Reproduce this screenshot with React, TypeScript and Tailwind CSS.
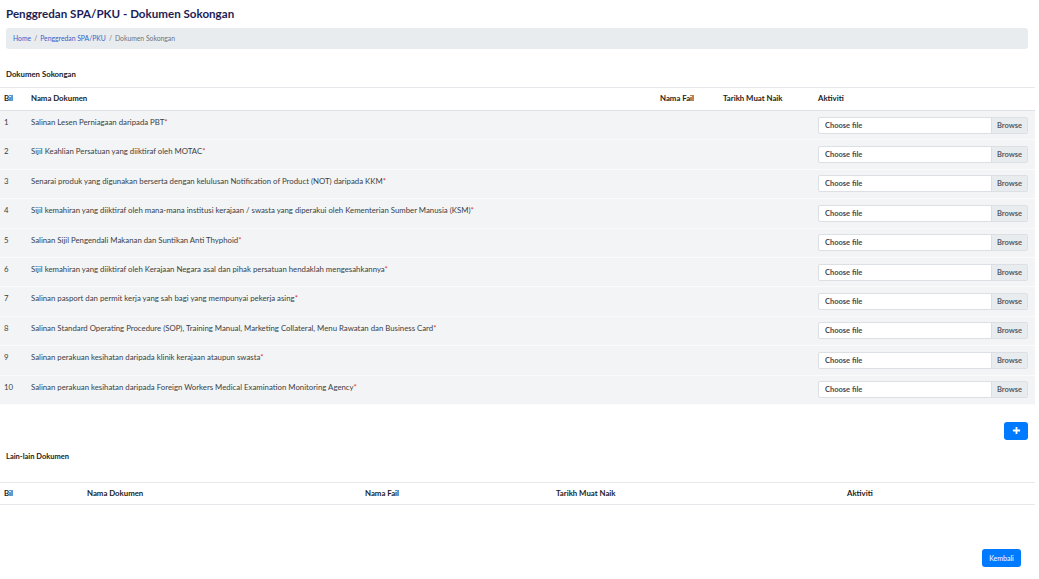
const docs = [
  "Salinan Lesen Perniagaan daripada PBT",
  "Sijil Keahlian Persatuan yang diiktiraf oleh MOTAC",
  "Senarai produk yang digunakan berserta dengan kelulusan Notification of Product (NOT) daripada KKM",
  "Sijil kemahiran yang diiktiraf oleh mana-mana institusi kerajaan / swasta yang diperakui oleh Kementerian Sumber Manusia (KSM)",
  "Salinan Sijil Pengendali Makanan dan Suntikan Anti Thyphoid",
  "Sijil kemahiran yang diiktiraf oleh Kerajaan Negara asal dan pihak persatuan hendaklah mengesahkannya",
  "Salinan pasport dan permit kerja yang sah bagi yang mempunyai pekerja asing",
  "Salinan Standard Operating Procedure (SOP), Training Manual, Marketing Collateral, Menu Rawatan dan Business Card",
  "Salinan perakuan kesihatan daripada klinik kerajaan ataupun swasta",
  "Salinan perakuan kesihatan daripada Foreign Workers Medical Examination Monitoring Agency",
];

const FileInput = () => (
  <div className="flex h-[17px] w-[210px] items-stretch overflow-hidden rounded-[2px] border border-[#dcdfe3] bg-white text-[7.5px] font-bold">
    <span className="flex flex-1 items-center pl-[6px] text-[#444a52]">Choose file</span>
    <span className="flex w-[36px] items-center justify-center border-l border-[#dcdfe3] bg-[#e9ecef] text-[#555b63]">
      Browse
    </span>
  </div>
);

const App = () => {
  return (
    <div className="min-h-[579px] w-[1039px] bg-white font-['Lato',sans-serif] text-[#333]">
      <div className="pr-[4px]">
        <h1 className="pl-[6px] pt-[6px] text-[11.6px] font-bold leading-[16px] text-[#1d1d55]">
          Penggredan SPA/PKU - Dokumen Sokongan
        </h1>

        <div className="ml-[6px] mr-[7px] mt-[6px] flex h-[21px] items-center rounded-[3px] bg-[#e9ecef] pl-[7px] text-[6.8px] text-[#6c757d]">
          <span className="text-[#3561c9]">Home</span>
          <span className="px-[3px]">/</span>
          <span className="text-[#3561c9]">Penggredan SPA/PKU</span>
          <span className="px-[3px]">/</span>
          <span>Dokumen Sokongan</span>
        </div>

        <div className="mt-[20px] pl-[6px] text-[7.8px] font-bold leading-[10px] text-[#222]">
          Dokumen Sokongan
        </div>

        {/* jadual dokumen sokongan */}
        <div className="mt-[8px] border-t border-[#e6e8eb]">
          <div className="grid h-[23px] grid-cols-[31px_629px_63px_95px_1fr] items-center border-b border-[#dee1e5] text-[7.8px] font-bold text-[#222]">
            <div className="pl-[4px]">Bil</div>
            <div>Nama Dokumen</div>
            <div>Nama Fail</div>
            <div>Tarikh Muat Naik</div>
            <div>Aktiviti</div>
          </div>
          {docs.map((doc, i) => (
            <div
              key={doc}
              className="grid h-[29.4px] grid-cols-[31px_629px_63px_95px_1fr] border-b border-[#fafbfc] bg-[#f3f4f6] text-[7.8px] text-[#3a3f45]"
            >
              <div className="pl-[4px] pt-[6px]">{i + 1}</div>
              <div className="pt-[6px]">
                {doc}
                <span className="text-[#e3342f]">*</span>
              </div>
              <div />
              <div />
              <div className="flex items-center">
                <FileInput />
              </div>
            </div>
          ))}
        </div>

        <div className="mt-[17px] flex justify-end pr-[7px]">
          <button className="flex h-[18px] w-[24px] items-center justify-center rounded-[3px] bg-[#007bff] text-white">
            <svg width="9" height="9" viewBox="0 0 10 10">
              <path d="M5 1v8M1 5h8" stroke="white" strokeWidth="2" strokeLinecap="butt" />
            </svg>
          </button>
        </div>

        <div className="mt-[12px] pl-[6px] text-[7.5px] font-bold leading-[10px] text-[#222]">
          Lain-lain Dokumen
        </div>

        {/* jadual lain-lain dokumen */}
        <div className="mt-[20px] grid h-[23px] grid-cols-[87px_278px_191px_291px_1fr] items-center border-y border-[#e6e8eb] text-[7.8px] font-bold text-[#222]">
          <div className="pl-[4px]">Bil</div>
          <div>Nama Dokumen</div>
          <div>Nama Fail</div>
          <div>Tarikh Muat Naik</div>
          <div>Aktiviti</div>
        </div>

        <div className="mt-[44px] flex justify-end pr-[14px]">
          <button className="h-[18px] w-[39px] rounded-[3px] bg-[#007bff] text-[7px] text-white">
            Kembali
          </button>
        </div>
      </div>
    </div>
  );
};

export default App;
